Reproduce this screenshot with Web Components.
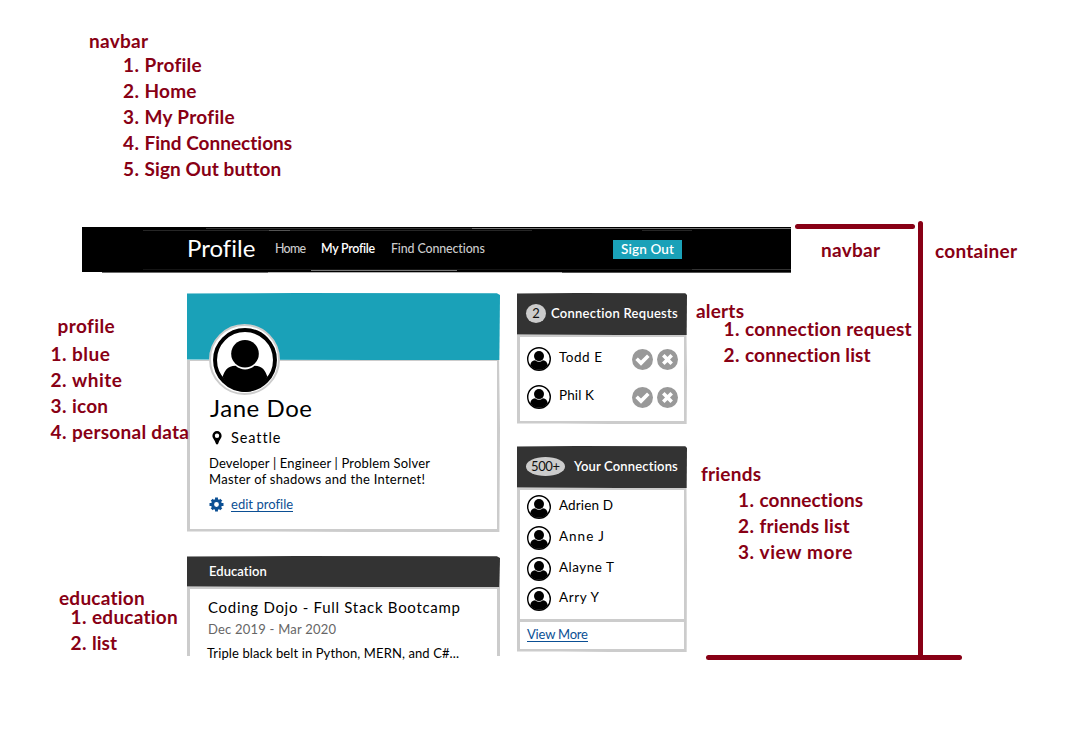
<!DOCTYPE html>
<html lang="en">
<head>
<meta charset="utf-8">
<title>Profile wireframe</title>
<style>
html,body{margin:0;background:#fff}
body{width:1066px;height:736px;overflow:hidden;position:relative;font-family:Lato,"Open Sans",sans-serif}
</style>
</head>
<body>
<wire-page></wire-page>

<note-block style="left:89px;top:31px" heading="navbar" w="59" indent="34" gap="4" items="Profile:57|Home:52|My Profile:90|Find Connections:148|Sign Out button:136"></note-block>
<note-block style="left:50.5px;top:316px" heading="profile" w="57" shift="7" gap="8" items="blue:38|white:50|icon:36|personal data:117"></note-block>
<note-block style="left:59px;top:588px" heading="education" w="86" indent="11.5" gap="-1" items="education:86|list:25"></note-block>
<note-block style="left:821px;top:240px" heading="navbar" w="59"></note-block>
<note-block style="left:935px;top:241px" heading="container" w="82"></note-block>
<note-block style="left:696px;top:301px" heading="alerts" w="48" indent="27.5" gap="-2" items="connection request:167|connection list:126"></note-block>
<note-block style="left:701px;top:464px" heading="friends" w="60" indent="37" gap="6" items="connections:104|friends list:90|view more:93"></note-block>
<marker-line style="left:795px;top:224px;width:120px;height:5px"></marker-line>
<marker-line style="left:918px;top:221px;width:5px;height:438px"></marker-line>
<marker-line style="left:706px;top:655px;width:256px;height:5px"></marker-line>

<script>
function define(name, html, setup) {
  customElements.define(name, class extends HTMLElement {
    connectedCallback() {
      if (this.shadowRoot) return;
      this.attachShadow({mode: 'open'}).innerHTML = html;
      if (setup) setup(this, this.shadowRoot);
    }
  });
}

// Text whose tracking is adjusted so that the line takes the width in "w".
define('fit-text', `<style>
:host{display:block;white-space:nowrap;line-height:20px;height:20px;flex:none}
span{display:inline-block;white-space:nowrap}
</style><span><slot></slot></span>`, (el, root) => {
  const w = +el.getAttribute('w'), span = root.querySelector('span');
  const natural = span.getBoundingClientRect().width;
  const n = el.textContent.length;
  if (n > 1) span.style.letterSpacing = ((w - natural) / (n - 1)) + 'px';
  el.style.width = w + 'px';
});

define('user-avatar', `<style>:host{display:block;width:24px;height:24px;flex:none}svg{display:block;width:100%;height:100%}</style>
<svg viewBox="0 0 24 24"><circle cx="12" cy="12" r="11.3" fill="#fff" stroke="#000" stroke-width="1.4"/>
<path d="M3.2 18.6C3.6 15.4 5.1 13.4 8.1 13.2Q12 16.4 15.9 13.2C18.9 13.4 20.4 15.4 20.8 18.6A11.3 11.3 0 0 1 3.2 18.6Z"/><circle cx="12" cy="9.1" r="5"/></svg>`);

define('round-action', `<style>:host{display:block;width:21px;height:21px;flex:none}svg{display:block}</style>
<svg width="21" height="21" viewBox="0 0 21 21"><circle cx="10.5" cy="10.5" r="10.5" fill="#999"/><path fill="none" stroke="#fff" stroke-width="3.6"/></svg>`,
(el, root) => root.querySelector('path').setAttribute('d',
  el.getAttribute('kind') === 'check' ? 'M4.6 9.8L9 14.1L16.3 6.8' : 'M6.3 6.3L14.7 14.7M14.7 6.3L6.3 14.7'));

define('count-badge', `<style>:host{display:flex;align-items:center;justify-content:center;height:19px;background:#ccc;border-radius:50%;color:#111;font-size:13px;font-weight:400;flex:none}</style><slot></slot>`);

define('wire-card', `<style>
:host{display:block;box-sizing:border-box;background:#fff}
header{box-sizing:border-box;display:flex;background:var(--head,#333);height:var(--head-h,42px);color:#fff;font-size:13px;font-weight:600;clip-path:polygon(0 .6px,35% 0,99% .3px,100% 2px,99.8% 100%,60% 100%,0 calc(100% - .4px))}
.body{box-sizing:border-box;height:calc(100% - var(--head-h,42px));border:3px solid #ccc;border-top-width:var(--top,2px);border-bottom-width:var(--bottom,3px);clip-path:polygon(0 0,99.7% 0,100% 40%,99.8% 100%,55% 100%,25% calc(100% - .5px),0 calc(100% - .4px))}
:host([open]) .body{clip-path:none}
</style><header><slot name="head"></slot></header><div class="body"><slot></slot></div>`);

define('nav-bar', `<style>
:host{display:flex;box-sizing:border-box;height:45px;background:#000;color:#ccc;padding:0 109px 0 105px;align-items:flex-start;position:relative;font-size:12.4px;font-weight:500}
svg{position:absolute;left:0;top:0}
.brand{font-size:24px;color:#fff;margin:11px 20px 0 0;font-weight:400}
.link{margin:12px 15px 0 0}.on{color:#fff;font-weight:600;margin-right:16px}
.button{background:#1aa1b8;color:#fff;padding:0 8px;height:19px;margin:12.5px 0 0 auto;font-size:13.5px;font-weight:600}
.button fit-text{height:18px;line-height:18px}
</style>
<svg width="709" height="46" fill="none"><path d="M124 1.5H709" stroke="#333"/><path d="M390 1.5H709" stroke="#777"/><path d="M61 3.5H450M560 3.5H610" stroke="#262626"/><path d="M187 3.5H208" stroke="#555"/><path d="M61 42.5H709" stroke="#151515"/><path d="M229 43.5H375" stroke="#777"/><path d="M610 42.5H709" stroke="#333"/><path d="M20 45.5H186" stroke="#999"/><path d="M480 45.5H709" stroke="#777"/><path d="M20 44.8H709" stroke="#000"/></svg>
<fit-text class="brand" w="68">Profile</fit-text>
<fit-text class="link" w="31">Home</fit-text>
<fit-text class="link on" w="54">My Profile</fit-text>
<fit-text class="link" w="94">Find Connections</fit-text>
<div class="button"><fit-text w="53">Sign Out</fit-text></div>`);

define('profile-card', `<style>
:host{display:block;position:relative}
wire-card{height:239px;--head:#1aa1b8;--head-h:67px;--top:1px}
.photo{position:absolute;left:22px;top:31px;width:71px;height:71px;box-sizing:border-box;border:2px solid #ccc;border-radius:50%;background:#fff;padding:1.5px}
.photo svg{display:block}
.data{padding:37px 0 0 19px;font-size:13px}
.row{display:flex;align-items:center;height:20px}
.row svg{flex:none;margin-right:7px}
.name{font-size:24px}
.place{font-size:14.5px;margin-top:10px}
.line{line-height:16px;height:16px}.bio{margin-top:7px;margin-bottom:7px}
.edit{color:#0b4f94}.edit fit-text{border-bottom:1px solid;height:15px;line-height:16px}
</style>
<wire-card><div class="data">
<fit-text class="name" style="margin-left:1px" w="102">Jane Doe</fit-text>
<div class="row place"><svg width="15" height="14" viewBox="0 0 15 14"><path fill-rule="evenodd" d="M8 0A4.7 4.7 0 0 1 12.6 4.7C12.6 7.2 10.5 8.5 9.4 12.2Q8 15 6.7 12.2C5.6 8.5 3.4 7.2 3.4 4.7A4.7 4.7 0 0 1 8 0ZM8 2.6A2.2 2.2 0 1 0 8 7A2.2 2.2 0 1 0 8 2.6Z"/></svg><fit-text w="49">Seattle</fit-text></div>
<div class="bio"><fit-text class="line" w="221">Developer | Engineer | Problem Solver</fit-text>
<fit-text class="line" w="216">Master of shadows and the Internet!</fit-text></div>
<div class="row edit"><svg width="15" height="15" viewBox="0 0 15 15"><circle cx="7.5" cy="7.5" r="3.9" fill="none" stroke="currentColor" stroke-width="3"/><path d="M7.5 .5V3M7.5 12V14.5M.5 7.5H3M12 7.5H14.5M2.7 2.7L4.3 4.3M10.7 10.7L12.3 12.3M12.3 2.7L10.7 4.3M4.3 10.7L2.7 12.3" stroke="currentColor" stroke-width="2.9"/></svg><fit-text w="62">edit profile</fit-text></div>
</div></wire-card>
<div class="photo"><svg width="64" height="64" viewBox="0 0 63 63"><circle cx="31.5" cy="31.5" r="29.5" fill="#fff" stroke="#000" stroke-width="3.9"/><path d="M9.5 48C11.5 42 14 37.2 22.2 37.1Q31.5 44.6 41 37.1C49 37.2 51.5 42 53.5 48C43 68 20 68 9.5 48Z"/><circle cx="31.5" cy="25.3" r="13.6"/></svg></div>`);

define('education-card', `<style>
:host{display:block}
wire-card{height:100px;--head-h:31px;--bottom:0px}
.list{padding:6px 0 0 18px;font-size:13px}
</style><wire-card open><fit-text slot="head" style="margin:5px 0 0 22px" w="58">Education</fit-text>
<div class="list"><fit-text style="font-size:15px;margin-top:2px" w="252">Coding Dojo - Full Stack Bootcamp</fit-text>
<fit-text style="color:#666;margin-top:2px" w="128">Dec 2019 - Mar 2020</fit-text>
<fit-text style="margin:4px 0 0 -1px" w="252">Triple black belt in Python, MERN, and C#...</fit-text></div></wire-card>`);

define('person-row', `<style>
:host{display:flex;align-items:center;height:31px;font-size:13.5px;padding-right:6px}
user-avatar{margin-right:8px}fit-text{position:relative;top:-2px;margin-right:auto}
.actions{display:flex;gap:4px}
</style><user-avatar></user-avatar><fit-text></fit-text><div class="actions"></div>`, (el, root) => {
  const old = root.querySelector('fit-text'), t = document.createElement('fit-text');
  t.textContent = el.getAttribute('name');
  t.setAttribute('w', el.getAttribute('w'));
  old.replaceWith(t);
  if (el.hasAttribute('pending'))
    root.querySelector('.actions').innerHTML = '<round-action kind="check"></round-action><round-action kind="cross"></round-action>';
});

define('requests-card', `<style>
:host{display:block}wire-card{height:131px}
.head{display:flex;align-items:center;padding:0 0 2px 9px;gap:5px}
.rows{padding:3px 0 0 7px}person-row{height:38px}
</style><wire-card><div slot="head" class="head"><count-badge style="width:20px">2</count-badge><fit-text w="127">Connection Requests</fit-text></div>
<div class="rows"><person-row name="Todd E" w="43" pending></person-row><person-row name="Phil K" w="35" pending></person-row></div></wire-card>`);

define('connections-card', `<style>
:host{display:block}wire-card{height:206px}
.head{display:flex;align-items:center;padding:0 0 2px 9px;gap:9px}
.rows{padding:2px 0 0 7px;height:132px;box-sizing:border-box;border-bottom:3px solid #ccc}
person-row{height:30.7px}
.more{color:#0b4f94;font-size:13px;margin:4px 0 0 7px;border-bottom:1px solid;height:15px;line-height:16px}
</style><wire-card><div slot="head" class="head"><count-badge style="width:39px"><fit-text w="29">500+</fit-text></count-badge><fit-text w="104">Your Connections</fit-text></div>
<div class="rows"><person-row name="Adrien D" w="54"></person-row><person-row name="Anne J" w="45"></person-row><person-row name="Alayne T" w="55"></person-row><person-row name="Arry Y" w="40"></person-row></div>
<fit-text class="more" w="61">View More</fit-text></wire-card>`);

define('wire-page', `<style>
:host{display:block;padding:227px 275px 0 82px;color:#000}
main{display:grid;grid-template-columns:313px 170px;column-gap:17px;margin:21px 0 0 105px;align-items:start}
.left{display:grid;row-gap:24px}.right{display:grid;row-gap:22px}
</style><nav-bar></nav-bar><main><div class="left"><profile-card></profile-card><education-card></education-card></div>
<div class="right"><requests-card></requests-card><connections-card></connections-card></div></main>`);

define('marker-line', `<style>:host{position:absolute;background:#880015;border-radius:3px}</style>`);

define('note-block', `<style>
:host{position:absolute;color:#880015;font-size:19px;font-weight:700}
fit-text{height:18px;line-height:18px;padding:1px 0}.item{display:flex;height:26px}.num{width:21.5px}
</style><div class="list"></div>`, (el, root) => {
  const box = root.querySelector('.list');
  const get = (k, d) => el.hasAttribute(k) ? el.getAttribute(k) : d;
  let html = `<fit-text w="${get('w')}" style="margin-left:${get('shift', 0)}px">${get('heading')}</fit-text>`;
  if (get('items', '')) {
    html += `<div style="margin:${get('gap', 0)}px 0 0 ${get('indent', 0)}px">` + get('items').split('|').map((s, i) => {
      const [text, w] = s.split(':');
      return `<div class="item"><div class="num"><fit-text w="16">${i + 1}.</fit-text></div><fit-text w="${w}">${text}</fit-text></div>`;
    }).join('') + '</div>';
  }
  box.innerHTML = html;
});
</script>
</body>
</html>
